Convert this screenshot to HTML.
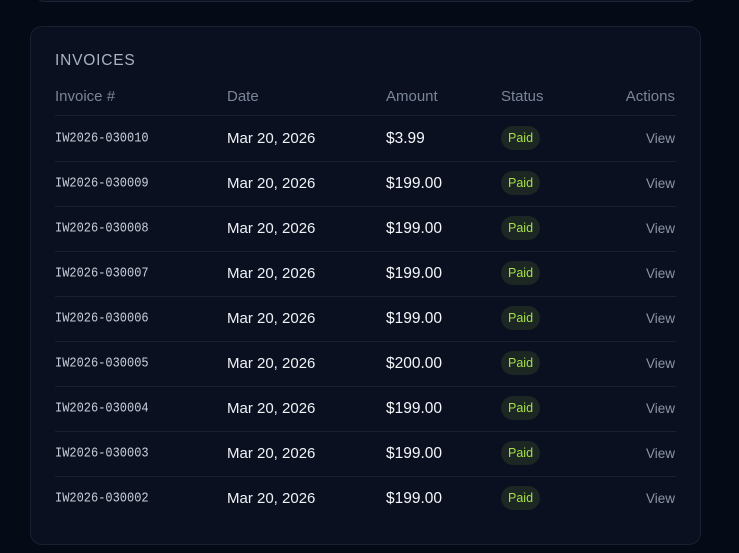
<!DOCTYPE html>
<html><head><style>
html,body{margin:0;padding:0;width:739px;height:553px;background:#050a17;overflow:hidden;font-family:"Liberation Sans",sans-serif}
.top{position:absolute;left:36px;top:-10px;width:658px;height:11px;border:1px solid #1c2433;border-top:none;border-radius:0 0 8px 8px;background:#0a1120}
.card{position:absolute;left:30px;top:26px;width:669px;height:517px;border:1px solid #182031;border-radius:12px;background:#0a1020}
.title{position:absolute;left:24px;top:25px;font-size:15.5px;letter-spacing:0.8px;color:#a9b3c3}
.hdr,.row{position:absolute;left:24px;width:621px;height:45px}
.hdr{top:51px;height:37px;border-bottom:1px solid #182031}
.row{border-bottom:1px solid #182031}
.c{position:absolute;top:0;line-height:45px;white-space:nowrap}
.hdr .c{line-height:38px;font-size:15px;color:#7a8597}
.inv{left:0;font-family:"Liberation Mono",monospace;font-size:12px;color:#c8ced8;transform:scaleY(1.12)}
.date{left:172px;font-size:15px;color:#eef1f5}
.amt{left:331px;font-size:15.5px;color:#f4f6f9}
.st{left:446px}
.act{right:1px;font-size:13.5px;color:#8c95a3}
.badge{display:inline-block;margin-top:10px;height:24px;line-height:24px;padding:0 7px;border-radius:12px;background:#1c2622;color:#a3e048;font-size:12.5px;vertical-align:top}
</style></head><body>
<div class="top"></div>
<div class="card">
<div class="title">INVOICES</div>
<div class="hdr"><span class="c" style="left:0">Invoice #</span><span class="c" style="left:172px">Date</span><span class="c" style="left:331px">Amount</span><span class="c" style="left:446px">Status</span><span class="c" style="right:1px">Actions</span></div>
<div class="row" style="top:89px"><span class="c inv">IW2026-030010</span><span class="c date">Mar 20, 2026</span><span class="c amt">$3.99</span><span class="c st"><span class="badge">Paid</span></span><span class="c act">View</span></div>
<div class="row" style="top:134px"><span class="c inv">IW2026-030009</span><span class="c date">Mar 20, 2026</span><span class="c amt">$199.00</span><span class="c st"><span class="badge">Paid</span></span><span class="c act">View</span></div>
<div class="row" style="top:179px"><span class="c inv">IW2026-030008</span><span class="c date">Mar 20, 2026</span><span class="c amt">$199.00</span><span class="c st"><span class="badge">Paid</span></span><span class="c act">View</span></div>
<div class="row" style="top:224px"><span class="c inv">IW2026-030007</span><span class="c date">Mar 20, 2026</span><span class="c amt">$199.00</span><span class="c st"><span class="badge">Paid</span></span><span class="c act">View</span></div>
<div class="row" style="top:269px"><span class="c inv">IW2026-030006</span><span class="c date">Mar 20, 2026</span><span class="c amt">$199.00</span><span class="c st"><span class="badge">Paid</span></span><span class="c act">View</span></div>
<div class="row" style="top:314px"><span class="c inv">IW2026-030005</span><span class="c date">Mar 20, 2026</span><span class="c amt">$200.00</span><span class="c st"><span class="badge">Paid</span></span><span class="c act">View</span></div>
<div class="row" style="top:359px"><span class="c inv">IW2026-030004</span><span class="c date">Mar 20, 2026</span><span class="c amt">$199.00</span><span class="c st"><span class="badge">Paid</span></span><span class="c act">View</span></div>
<div class="row" style="top:404px"><span class="c inv">IW2026-030003</span><span class="c date">Mar 20, 2026</span><span class="c amt">$199.00</span><span class="c st"><span class="badge">Paid</span></span><span class="c act">View</span></div>
<div class="row" style="top:449px;border-bottom:none"><span class="c inv">IW2026-030002</span><span class="c date">Mar 20, 2026</span><span class="c amt">$199.00</span><span class="c st"><span class="badge">Paid</span></span><span class="c act">View</span></div>
</div>
</body></html>
